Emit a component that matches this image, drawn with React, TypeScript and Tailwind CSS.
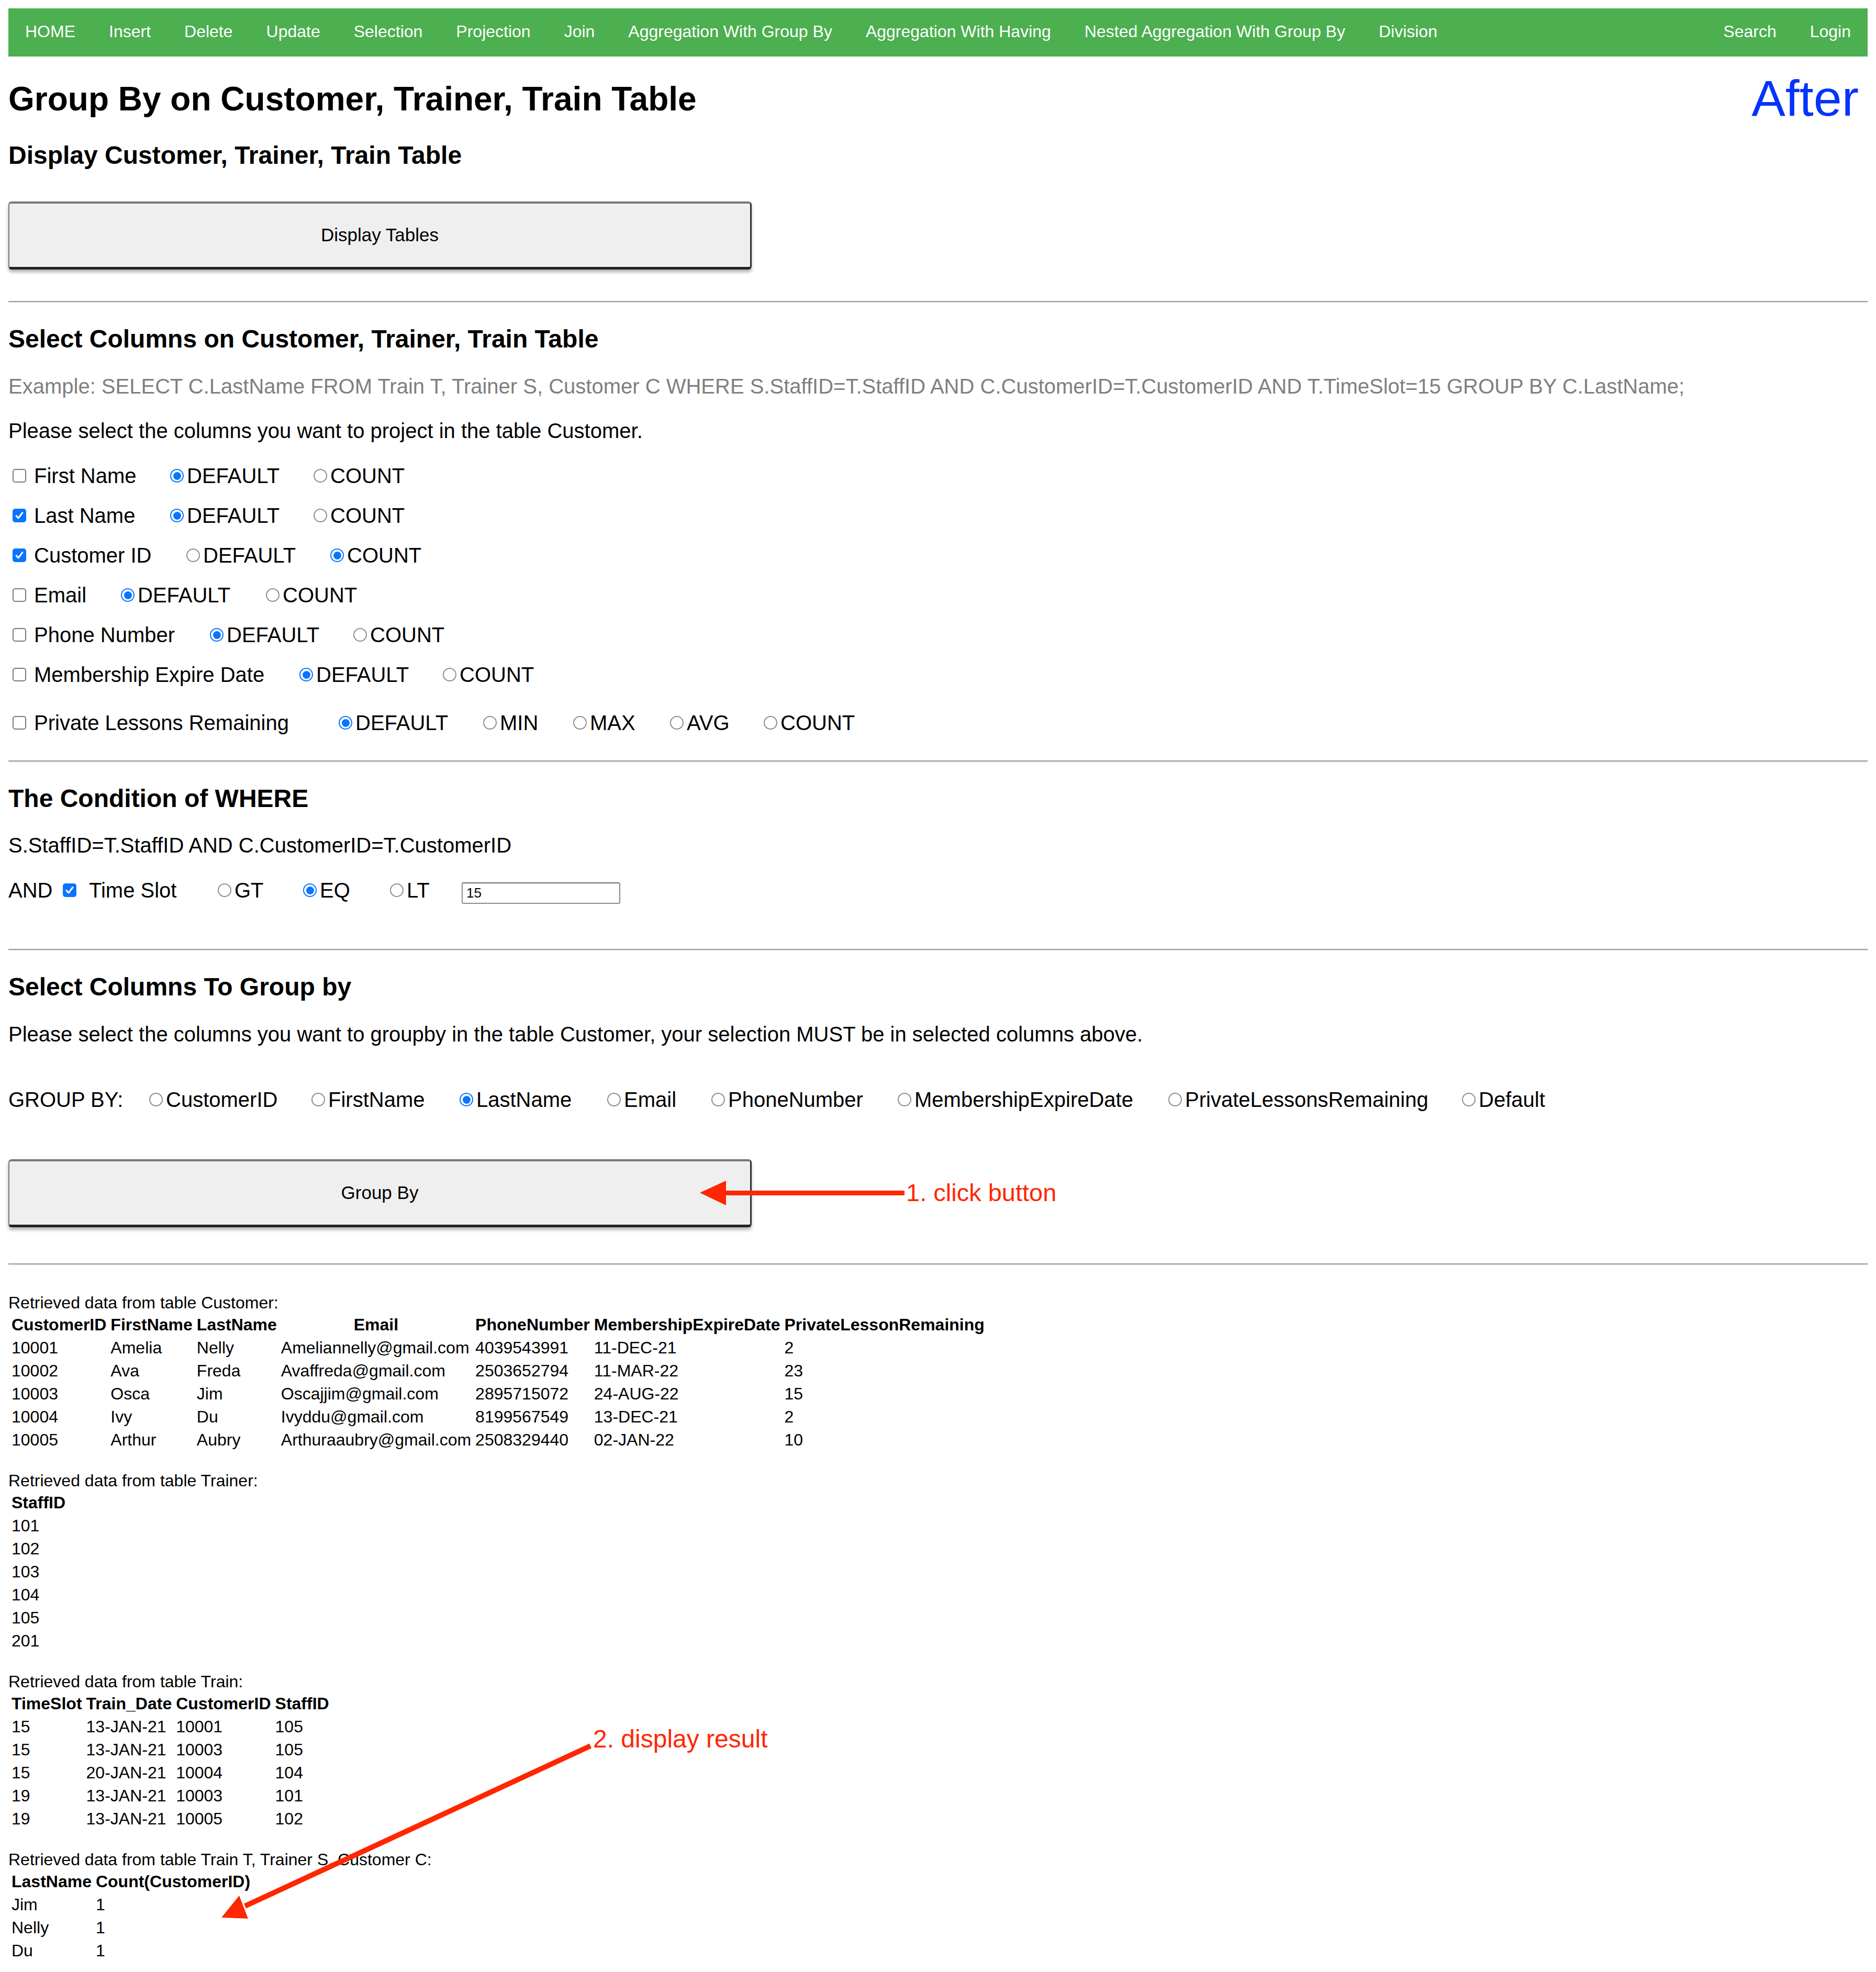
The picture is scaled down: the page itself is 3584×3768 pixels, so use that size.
import React from "react";

const navLeft = [
  "HOME",
  "Insert",
  "Delete",
  "Update",
  "Selection",
  "Projection",
  "Join",
  "Aggregation With Group By",
  "Aggregation With Having",
  "Nested Aggregation With Group By",
  "Division",
];

type Opt = { label: string; on?: boolean; w?: string };

const columnRows: { label: string; checked: boolean; w: string; gap: string; opts: Opt[] }[] = [
  { label: "First Name", checked: false, w: "w-[309px]", gap: "mt-[40px]", opts: [{ label: "DEFAULT", on: true, w: "w-[274px]" }, { label: "COUNT" }] },
  { label: "Last Name", checked: true, w: "w-[309px]", gap: "mt-[30px]", opts: [{ label: "DEFAULT", on: true, w: "w-[274px]" }, { label: "COUNT" }] },
  { label: "Customer ID", checked: true, w: "w-[340px]", gap: "mt-[30px]", opts: [{ label: "DEFAULT", w: "w-[275px]" }, { label: "COUNT", on: true }] },
  { label: "Email", checked: false, w: "w-[215px]", gap: "mt-[30px]", opts: [{ label: "DEFAULT", on: true, w: "w-[277px]" }, { label: "COUNT" }] },
  { label: "Phone Number", checked: false, w: "w-[385px]", gap: "mt-[30px]", opts: [{ label: "DEFAULT", on: true, w: "w-[274px]" }, { label: "COUNT" }] },
  { label: "Membership Expire Date", checked: false, w: "w-[556px]", gap: "mt-[30px]", opts: [{ label: "DEFAULT", on: true, w: "w-[274px]" }, { label: "COUNT" }] },
  {
    label: "Private Lessons Remaining",
    checked: false,
    w: "w-[631px]",
    gap: "mt-[46px]",
    opts: [
      { label: "DEFAULT", on: true, w: "w-[276px]" },
      { label: "MIN", w: "w-[172px]" },
      { label: "MAX", w: "w-[185px]" },
      { label: "AVG", w: "w-[179px]" },
      { label: "COUNT" },
    ],
  },
];

const groupOpts: Opt[] = [
  { label: "CustomerID", w: "w-[310px]" },
  { label: "FirstName", w: "w-[283px]" },
  { label: "LastName", on: true, w: "w-[282px]" },
  { label: "Email", w: "w-[199px]" },
  { label: "PhoneNumber", w: "w-[356px]" },
  { label: "MembershipExpireDate", w: "w-[517px]" },
  { label: "PrivateLessonsRemaining", w: "w-[561px]" },
  { label: "Default" },
];

const tables: { title: string; head: string[]; rows: string[][] }[] = [
  {
    title: "Retrieved data from table Customer:",
    head: ["CustomerID", "FirstName", "LastName", "Email", "PhoneNumber", "MembershipExpireDate", "PrivateLessonRemaining"],
    rows: [
      ["10001", "Amelia", "Nelly", "Ameliannelly@gmail.com", "4039543991", "11-DEC-21", "2"],
      ["10002", "Ava", "Freda", "Avaffreda@gmail.com", "2503652794", "11-MAR-22", "23"],
      ["10003", "Osca", "Jim", "Oscajjim@gmail.com", "2895715072", "24-AUG-22", "15"],
      ["10004", "Ivy", "Du", "Ivyddu@gmail.com", "8199567549", "13-DEC-21", "2"],
      ["10005", "Arthur", "Aubry", "Arthuraaubry@gmail.com", "2508329440", "02-JAN-22", "10"],
    ],
  },
  {
    title: "Retrieved data from table Trainer:",
    head: ["StaffID"],
    rows: [["101"], ["102"], ["103"], ["104"], ["105"], ["201"]],
  },
  {
    title: "Retrieved data from table Train:",
    head: ["TimeSlot", "Train_Date", "CustomerID", "StaffID"],
    rows: [
      ["15", "13-JAN-21", "10001", "105"],
      ["15", "13-JAN-21", "10003", "105"],
      ["15", "20-JAN-21", "10004", "104"],
      ["19", "13-JAN-21", "10003", "101"],
      ["19", "13-JAN-21", "10005", "102"],
    ],
  },
  {
    title: "Retrieved data from table Train T, Trainer S, Customer C:",
    head: ["LastName", "Count(CustomerID)"],
    rows: [
      ["Jim", "1"],
      ["Nelly", "1"],
      ["Du", "1"],
    ],
  },
];

function Radio({ on = false }: { on?: boolean }) {
  if (on) {
    return (
      <span className="inline-flex h-[26px] w-[26px] shrink-0 items-center justify-center rounded-full border-[2px] border-[#0a74ff] bg-white">
        <span className="h-[15px] w-[15px] rounded-full bg-[#0a74ff]" />
      </span>
    );
  }
  return <span className="inline-block h-[26px] w-[26px] shrink-0 rounded-full border-[2px] border-[#8e8e8e] bg-white" />;
}

function Check({ on = false }: { on?: boolean }) {
  if (on) {
    return (
      <span className="inline-flex h-[26px] w-[26px] shrink-0 items-center justify-center rounded-[5px] bg-[#0a74ff]">
        <svg viewBox="0 0 26 26" className="h-[26px] w-[26px]">
          <path d="M7 13.5 L11 18 L19 7.5" fill="none" stroke="white" strokeWidth="3" strokeLinecap="round" strokeLinejoin="round" />
        </svg>
      </span>
    );
  }
  return <span className="inline-block h-[26px] w-[26px] shrink-0 rounded-[5px] border-[2px] border-[#7a7a7a] bg-white" />;
}

function Option({ label, on, w }: Opt) {
  return (
    <span className={`flex h-[46px] shrink-0 items-center ${w ?? ""}`}>
      <Radio on={on} />
      <span className="ml-[6px]">{label}</span>
    </span>
  );
}

function BigButton({ children }: { children: React.ReactNode }) {
  return (
    <button className="flex h-[130px] w-[1420px] items-center justify-center rounded-[6px] border-t-[4px] border-r-[3px] border-b-[5px] border-l-[2px] border-t-[#777777] border-r-[#333333] border-b-[#222222] border-l-[#7a7a7a] bg-[#efefef] text-[35px] text-black shadow-[0_5px_6px_rgba(0,0,0,0.3)]">
      {children}
    </button>
  );
}

function Rule({ className }: { className: string }) {
  return <div className={`border-t-[2px] border-b-[2px] border-t-[#9a9a9a] border-b-[#ececec] ${className}`} />;
}

export default function App() {
  return (
    <div className="relative min-h-[3768px] w-[3584px] bg-white px-[16px] pt-[16px] font-['Liberation_Sans',Arial,Helvetica,sans-serif] text-black">
      <nav className="flex h-[92px] bg-[#4caf50] text-[32px] leading-[88px] text-white">
        {navLeft.map((item) => (
          <a key={item} className="px-[32px]">
            {item}
          </a>
        ))}
        <a className="ml-auto px-[32px]">Search</a>
        <a className="px-[32px]">Login</a>
      </nav>

      <h1 className="mt-[44px] text-[64px] leading-[74px] font-bold">Group By on Customer, Trainer, Train Table</h1>
      <div className="absolute top-[139px] right-[33px] text-[97px] leading-none text-[#0433ff]">After</div>

      <h2 className="mt-[43px] text-[48px] leading-[55px] font-bold">Display Customer, Trainer, Train Table</h2>
      <div className="mt-[61px]">
        <BigButton>Display Tables</BigButton>
      </div>

      <Rule className="mt-[60px]" />

      <section className="text-[40px] leading-[46px]">
        <h2 className="mt-[41px] text-[48px] leading-[55px] font-bold">Select Columns on Customer, Trainer, Train Table</h2>
        <p className="mt-[40px] text-[#7f7f7f]">
          Example: SELECT C.LastName FROM Train T, Trainer S, Customer C WHERE S.StaffID=T.StaffID AND C.CustomerID=T.CustomerID AND T.TimeSlot=15 GROUP BY C.LastName;
        </p>
        <p className="mt-[39px]">Please select the columns you want to project in the table Customer.</p>

        {columnRows.map((row) => (
          <div key={row.label} className={`flex h-[46px] items-center ${row.gap}`}>
            <span className={`flex h-[46px] shrink-0 items-center pl-[8px] ${row.w}`}>
              <Check on={row.checked} />
              <span className="ml-[15px]">{row.label}</span>
            </span>
            {row.opts.map((o) => (
              <Option key={o.label} {...o} />
            ))}
          </div>
        ))}
      </section>

      <Rule className="mt-[49px]" />

      <section className="text-[40px] leading-[46px]">
        <h2 className="mt-[41px] text-[48px] leading-[55px] font-bold">The Condition of WHERE</h2>
        <p className="mt-[39px]">S.StaffID=T.StaffID AND C.CustomerID=T.CustomerID</p>
        <div className="mt-[40px] flex items-start">
          <span className="w-[104px] shrink-0">AND</span>
          <span className="flex h-[46px] w-[296px] shrink-0 items-center">
            <Check on />
            <span className="ml-[24px]">Time Slot</span>
          </span>
          <Option label="GT" w="w-[163px]" />
          <Option label="EQ" on w="w-[166px]" />
          <Option label="LT" w="w-[137px]" />
          <input
            readOnly
            value="15"
            className="mt-[8px] h-[41px] w-[303px] rounded-[3px] border-[2px] border-[#8a8a8a] border-t-[#6e6e6e] pl-[7px] text-[26px] leading-none outline-none"
          />
        </div>
      </section>

      <Rule className="mt-[86px]" />

      <section className="text-[40px] leading-[46px]">
        <h2 className="mt-[41px] text-[48px] leading-[55px] font-bold">Select Columns To Group by</h2>
        <p className="mt-[40px]">Please select the columns you want to groupby in the table Customer, your selection MUST be in selected columns above.</p>
        <div className="mt-[79px] flex h-[46px] items-center">
          <span className="w-[269px] shrink-0">GROUP BY:</span>
          {groupOpts.map((o) => (
            <Option key={o.label} {...o} />
          ))}
        </div>
      </section>

      <div className="mt-[91px]">
        <BigButton>Group By</BigButton>
      </div>

      <Rule className="mt-[69px]" />

      <section className="mt-[53px] text-[32px] leading-[36px]">
        {tables.map((t, i) => (
          <div key={t.title}>
            {i > 0 && <div className="h-[36px]" />}
            <div>{t.title}</div>
            <table className="border-separate border-spacing-[4px]">
              <thead>
                <tr>
                  {t.head.map((h) => (
                    <th key={h} className="p-[2px] text-center font-bold">
                      {h}
                    </th>
                  ))}
                </tr>
              </thead>
              <tbody>
                {t.rows.map((r, ri) => (
                  <tr key={ri}>
                    {r.map((c, ci) => (
                      <td key={ci} className="p-[2px] text-left">
                        {c}
                      </td>
                    ))}
                  </tr>
                ))}
              </tbody>
            </table>
          </div>
        ))}
      </section>

      {/* red annotations drawn over the page */}
      <svg className="pointer-events-none absolute top-0 left-0" width="3584" height="3768">
        <rect x="1384" y="2275" width="344" height="9" fill="#ff2600" />
        <polygon points="1337,2279 1387,2256 1387,2303" fill="#ff2600" />
        <line x1="1128" y1="3336" x2="468" y2="3642" stroke="#ff2600" strokeWidth="10" />
        <polygon points="423,3664 457,3622 474,3666" fill="#ff2600" />
      </svg>
      <div className="absolute top-[2255px] left-[1731px] text-[47px] leading-none text-[#ff2600]">1. click button</div>
      <div className="absolute top-[3299px] left-[1133px] text-[48px] leading-none text-[#ff2600]">2. display result</div>
    </div>
  );
}
